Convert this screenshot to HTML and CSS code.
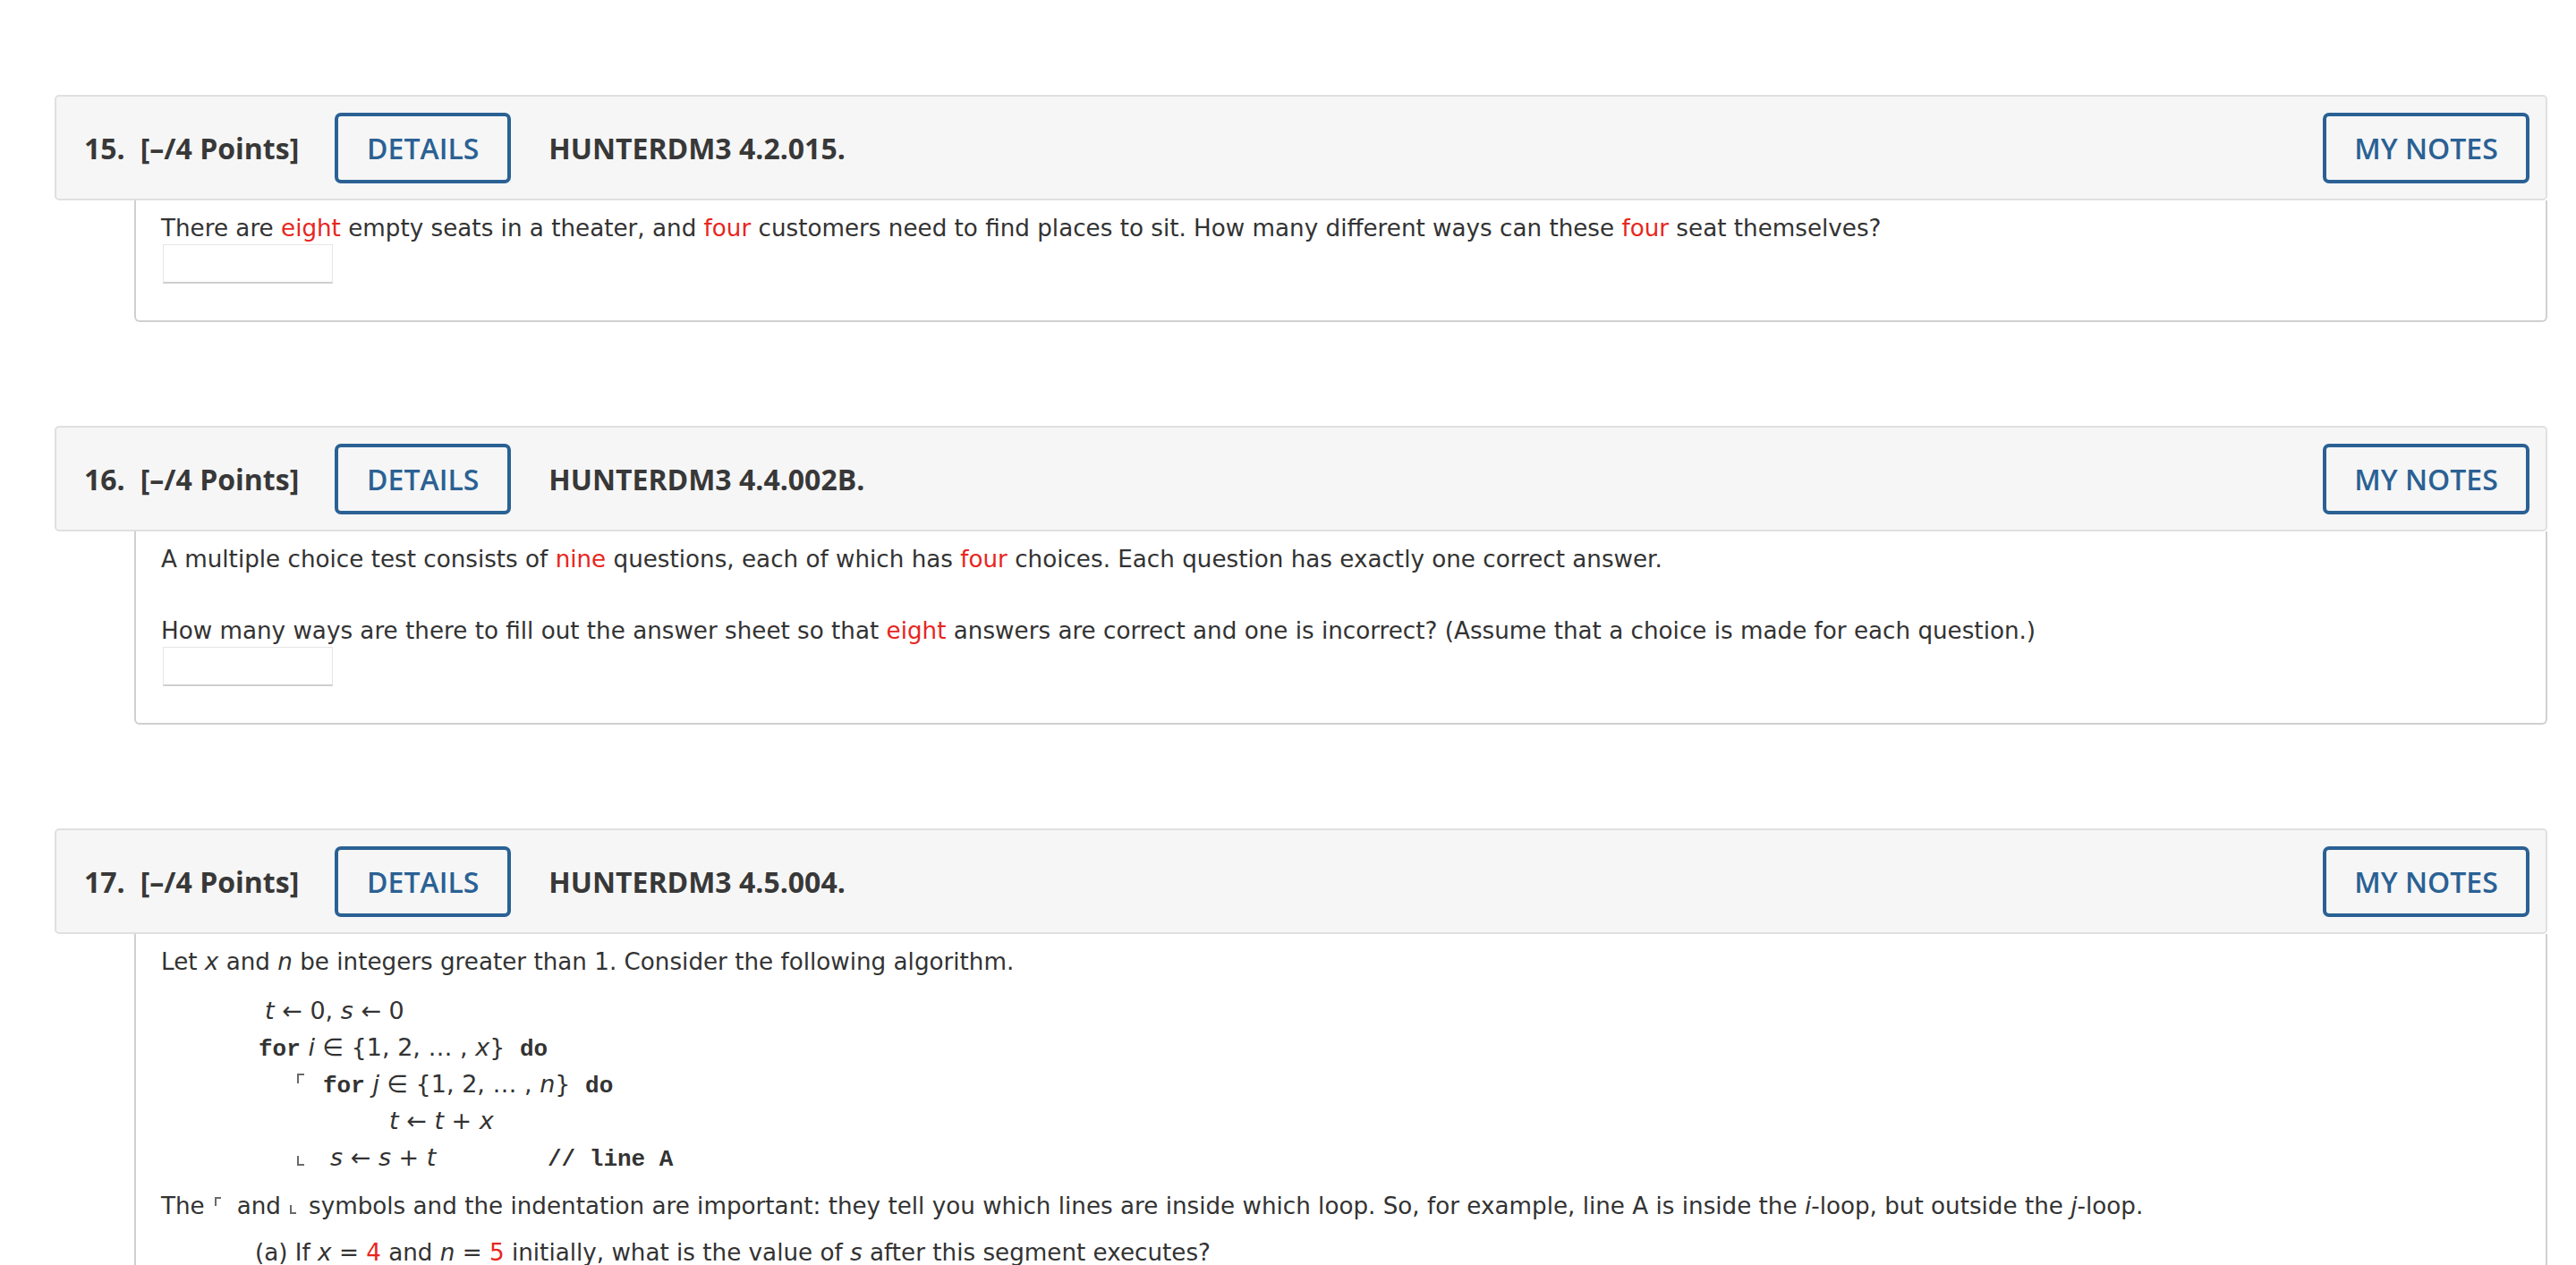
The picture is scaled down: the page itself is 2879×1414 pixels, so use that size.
FILE: index.html
```html
<!DOCTYPE html>
<html>
<head>
<meta charset="utf-8">
<link rel="stylesheet" href="styles.css">
</head>
<body>
<div class="page">

  <section class="q">
    <div class="q-head">
      <span class="q-num">15.</span>
      <span class="q-pts">[–/4 Points]</span>
      <button class="btn btn-details">DETAILS</button>
      <span class="q-code">HUNTERDM3 4.2.015.</span>
      <button class="btn btn-notes">MY NOTES</button>
    </div>
    <div class="q-body">
      <p class="line">There are <span class="red">eight</span> empty seats in a theater, and <span class="red">four</span> customers need to find places to sit. How many different ways can these <span class="red">four</span> seat themselves?</p>
      <div class="answer"></div>
    </div>
  </section>

  <section class="q">
    <div class="q-head">
      <span class="q-num">16.</span>
      <span class="q-pts">[–/4 Points]</span>
      <button class="btn btn-details">DETAILS</button>
      <span class="q-code">HUNTERDM3 4.4.002B.</span>
      <button class="btn btn-notes">MY NOTES</button>
    </div>
    <div class="q-body">
      <p class="line">A multiple choice test consists of <span class="red">nine</span> questions, each of which has <span class="red">four</span> choices. Each question has exactly one correct answer.</p>
      <p class="line gap">How many ways are there to fill out the answer sheet so that <span class="red">eight</span> answers are correct and one is incorrect? (Assume that a choice is made for each question.)</p>
      <div class="answer"></div>
    </div>
  </section>

  <section class="q">
    <div class="q-head">
      <span class="q-num">17.</span>
      <span class="q-pts">[–/4 Points]</span>
      <button class="btn btn-details">DETAILS</button>
      <span class="q-code">HUNTERDM3 4.5.004.</span>
      <button class="btn btn-notes">MY NOTES</button>
    </div>
    <div class="q-body">
      <p class="line">Let <i>x</i> and <i>n</i> be integers greater than 1. Consider the following algorithm.</p>
      <div class="algo">
        <div class="algo-line l1"><i>t</i> ← 0, <i>s</i> ← 0</div>
        <div class="algo-line l2"><b class="kw">for</b> <i>i</i> ∈ {1, 2, … , <i>x</i>} <span class="kw2">do</span></div>
        <div class="algo-line l3"><span class="corner top"></span><b class="kw">for</b> <i>j</i> ∈ {1, 2, … , <i>n</i>} <span class="kw2">do</span></div>
        <div class="algo-line l4"><i>t</i> ← <i>t</i> + <i>x</i></div>
        <div class="algo-line l5"><span class="corner bot"></span><span class="stmt"><i>s</i> ← <i>s</i> + <i>t</i></span><b class="kw cmt">// line A</b></div>
      </div>
      <p class="line para">The<span class="corner top small"></span>and<span class="corner bot small"></span>symbols and the indentation are important: they tell you which lines are inside which loop. So, for example, line A is inside the <i>i</i>-loop, but outside the <i>j</i>-loop.</p>
      <p class="line para sub">(a) If <i>x</i> = <span class="red">4</span> and <i>n</i> = <span class="red">5</span> initially, what is the value of <i>s</i> after this segment executes?</p>
      <div class="answer sub-answer"></div>
      <p class="line para sub">(b) Write a formula for the value of <i>s</i> after this segment executes, in terms of <i>x</i> and <i>n</i>.</p>
      <div class="answer sub-answer"></div>
    </div>
  </section>

</div>
</body>
</html>
```

FILE: styles.css
```css
html, body {
  margin: 0;
  padding: 0;
  background: #ffffff;
}

.page {
  padding: 106px 0 60px 61px;
  width: 2786px;
  display: flex;
  flex-direction: column;
  gap: 116px;
}

.q {
  display: flex;
  flex-direction: column;
}

.q-head {
  box-sizing: border-box;
  height: 118px;
  display: flex;
  align-items: center;
  background: #f6f6f6;
  border: 2px solid #e0e0e0;
  border-radius: 5px;
  padding: 0 18px 0 31px;
  font-family: "Open Sans", "Liberation Sans", sans-serif;
  font-size: 32px;
  color: #383838;
}

.q-num {
  font-weight: 700;
  margin-right: 17px;
}

.q-pts {
  font-weight: 700;
  margin-right: 40px;
}

.q-code {
  font-weight: 700;
  margin-left: 42px;
}

.btn {
  box-sizing: border-box;
  height: 79px;
  background: transparent;
  border: 4px solid #2a6194;
  border-radius: 7px;
  color: #2a6194;
  font-family: "Open Sans", "Liberation Sans", sans-serif;
  font-size: 32px;
  font-weight: 600;
  padding: 0;
  display: flex;
  align-items: center;
  justify-content: center;
}

.btn-details {
  width: 197px;
}

.btn-notes {
  width: 231px;
  margin-left: auto;
}

.q-body {
  margin-left: 89px;
  border: 2px solid #d0d0d0;
  border-top: none;
  border-radius: 0 0 6px 6px;
  padding: 14px 30px 41px 28px;
  font-family: "DejaVu Sans", Verdana, sans-serif;
  font-size: 26.2px;
  color: #333333;
}

.line {
  margin: 0;
  line-height: 35px;
}

.line.gap {
  margin-top: 45px;
}

.red {
  color: #e8261e;
}

.answer {
  box-sizing: border-box;
  width: 190px;
  height: 44px;
  margin-left: 2px;
  border: 1px solid #e6e6e6;
  border-bottom: 2px solid #cfcfcf;
  background: #ffffff;
}

.algo {
  margin: 16px 0 17px 0;
  padding-left: 109px;
  font-size: 27px;
}

.algo-line {
  line-height: 41px;
  height: 41px;
  white-space: nowrap;
}

.algo-line.l1 {
  padding-left: 7px;
}

.algo-line.l3,
.algo-line.l5 {
  padding-left: 43px;
}

.algo-line.l4 {
  padding-left: 146px;
}

.kw {
  font-family: "Liberation Mono", "Courier New", monospace;
  font-weight: 700;
  font-size: 26px;
}

.kw2 {
  font-family: "Liberation Mono", "Courier New", monospace;
  font-weight: 700;
  font-size: 26px;
  margin-left: 8px;
}

.corner {
  display: inline-block;
  box-sizing: border-box;
  width: 8px;
  height: 11px;
  border-color: #6a6a6a;
  border-style: solid;
  border-width: 0;
  margin-right: 21px;
}

.corner.top {
  border-top-width: 2px;
  border-left-width: 2px;
  vertical-align: 10px;
}

.corner.bot {
  border-bottom-width: 2px;
  border-left-width: 2px;
  vertical-align: 0;
  margin-right: 29px;
}

.corner.small {
  margin: 0 18px 0 11px;
  width: 7px;
  height: 10px;
}

.corner.bot.small {
  margin: 0 14px 0 10px;
}

.corner.top.small {
  vertical-align: 9px;
}

.stmt {
  display: inline-block;
  width: 243px;
}

.cmt {
  font-weight: 700;
}

.line.para {
  margin-top: 17px;
}

.line.sub {
  padding-left: 105px;
}

.sub-answer {
  margin-left: 107px;
  margin-top: 4px;
}
```
